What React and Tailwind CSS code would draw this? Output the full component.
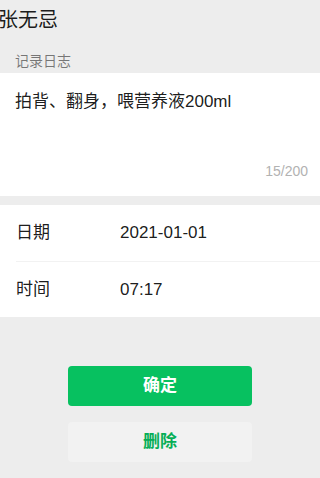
export default function App() {
  const font = { fontFamily: '"Liberation Sans", "Noto Sans CJK SC", sans-serif' };
  return (
    <div className="min-h-[478px] bg-[#ededed] text-[#000000e6]" style={font}>
      <div className="h-[40px] flex items-center -ml-[2px] text-[20px] leading-none">张无忌</div>
      <div className="h-[33px] flex items-center pl-[15px] text-[14px] text-[#00000080] pt-[12px] pb-[2px]">记录日志</div>

      <div className="bg-white h-[123px] flex flex-col px-[15px] pr-[12px]">
        <div className="mt-[19px] text-[17px] leading-[20px]">拍背、翻身，喂营养液200ml</div>
        <div className="mt-auto mb-[17px] text-right text-[14px] leading-[16px] text-[#b2b2b2]">15/200</div>
      </div>

      <div className="mt-[9px] bg-white">
        <div className="h-[56px] flex items-center px-4 text-[17px]">
          <span className="w-[104px]">日期</span>
          <span>2021-01-01</span>
        </div>
        <div className="ml-4 border-t border-[#0000000d]" />
        <div className="h-[55px] flex items-center px-4 text-[17px]">
          <span className="w-[104px]">时间</span>
          <span>07:17</span>
        </div>
      </div>

      <div className="flex flex-col items-center pt-[49px] gap-4">
        <button className="w-[184px] h-[40px] rounded-[4px] bg-[#07c160] text-white font-bold text-[17px]">确定</button>
        <button className="w-[184px] h-[40px] rounded-[4px] bg-[#f2f2f2] text-[#06ae56] font-bold text-[17px]">删除</button>
      </div>
    </div>
  );
}
